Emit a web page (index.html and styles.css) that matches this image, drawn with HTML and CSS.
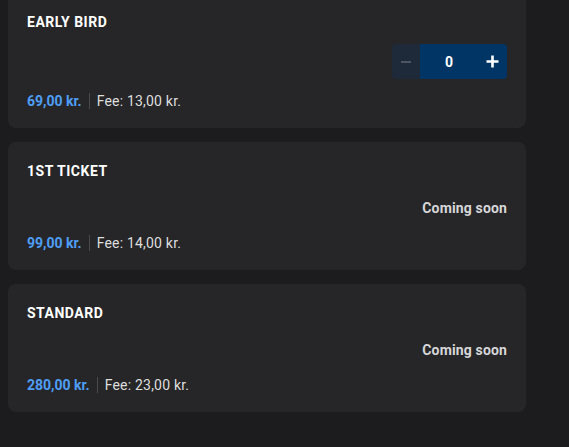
FILE: index.html
```html
<!DOCTYPE html>
<html>
<head>
<meta charset="utf-8">
<link rel="stylesheet" href="styles.css">
</head>
<body>
<div class="list">
  <div class="card">
    <div class="title">EARLY BIRD</div>
    <div class="action">
      <div class="stepper">
        <button class="step minus"><span class="dash"></span></button>
        <div class="qty">0</div>
        <button class="step plus">
          <svg width="13" height="13" viewBox="0 0 13 13"><path d="M6.5 0.5v12M0.5 6.5h12" stroke="#fff" stroke-width="2.6" fill="none"/></svg>
        </button>
      </div>
    </div>
    <div class="prices"><span class="price">69,00 kr.</span><span class="sep"></span><span class="fee">Fee: 13,00 kr.</span></div>
  </div>
  <div class="card">
    <div class="title">1ST TICKET</div>
    <div class="action"><span class="soon">Coming soon</span></div>
    <div class="prices"><span class="price">99,00 kr.</span><span class="sep"></span><span class="fee">Fee: 14,00 kr.</span></div>
  </div>
  <div class="card">
    <div class="title">STANDARD</div>
    <div class="action"><span class="soon">Coming soon</span></div>
    <div class="prices"><span class="price">280,00 kr.</span><span class="sep"></span><span class="fee">Fee: 23,00 kr.</span></div>
  </div>
</div>
</body>
</html>
```
FILE: styles.css
```css
html, body {
  margin: 0;
  padding: 0;
  background: #1c1c1e;
  font-family: Roboto, "Liberation Sans", sans-serif;
  height: 100%;
  overflow: hidden;
}
.list {
  width: 518px;
  margin: -7px 0 0 8px;
  display: flex;
  flex-direction: column;
  gap: 14px;
}
.card {
  background: #262628;
  border-radius: 8px;
  padding: 21px 19px 19px 19px;
  display: flex;
  flex-direction: column;
}
.title {
  color: #ffffff;
  font-weight: 700;
  font-size: 14px;
  line-height: 16px;
  letter-spacing: 0.5px;
}
.action {
  margin-top: 15px;
  min-height: 28px;
  display: flex;
  justify-content: flex-end;
  align-items: center;
}
.soon {
  color: #d6d6d8;
  font-weight: 700;
  font-size: 14px;
  line-height: 16px;
  letter-spacing: 0.15px;
}
.stepper {
  display: flex;
  height: 35px;
  border-radius: 4px;
  overflow: hidden;
  margin-top: -1px;
  margin-bottom: 1px;
}
.step {
  border: 0;
  padding: 0;
  margin: 0;
  display: flex;
  align-items: center;
  justify-content: center;
  height: 35px;
}
.minus {
  width: 28px;
  background: #1e2939;
}
.dash {
  width: 10px;
  height: 2px;
  background: #4c5562;
}
.qty {
  width: 58px;
  background: #003566;
  color: #fff;
  font-weight: 700;
  font-size: 14px;
  display: flex;
  align-items: center;
  justify-content: center;
}
.plus {
  width: 29px;
  background: #003566;
}
.prices {
  margin-top: 13px;
  display: flex;
  align-items: center;
  font-size: 14px;
  line-height: 16px;
}
.price {
  color: #4f9ef5;
  font-weight: 700;
}
.sep {
  width: 1px;
  height: 16px;
  background: #4a4a4d;
  margin: 0 7px;
}
.fee {
  color: #dedede;
  letter-spacing: 0.2px;
}
```
